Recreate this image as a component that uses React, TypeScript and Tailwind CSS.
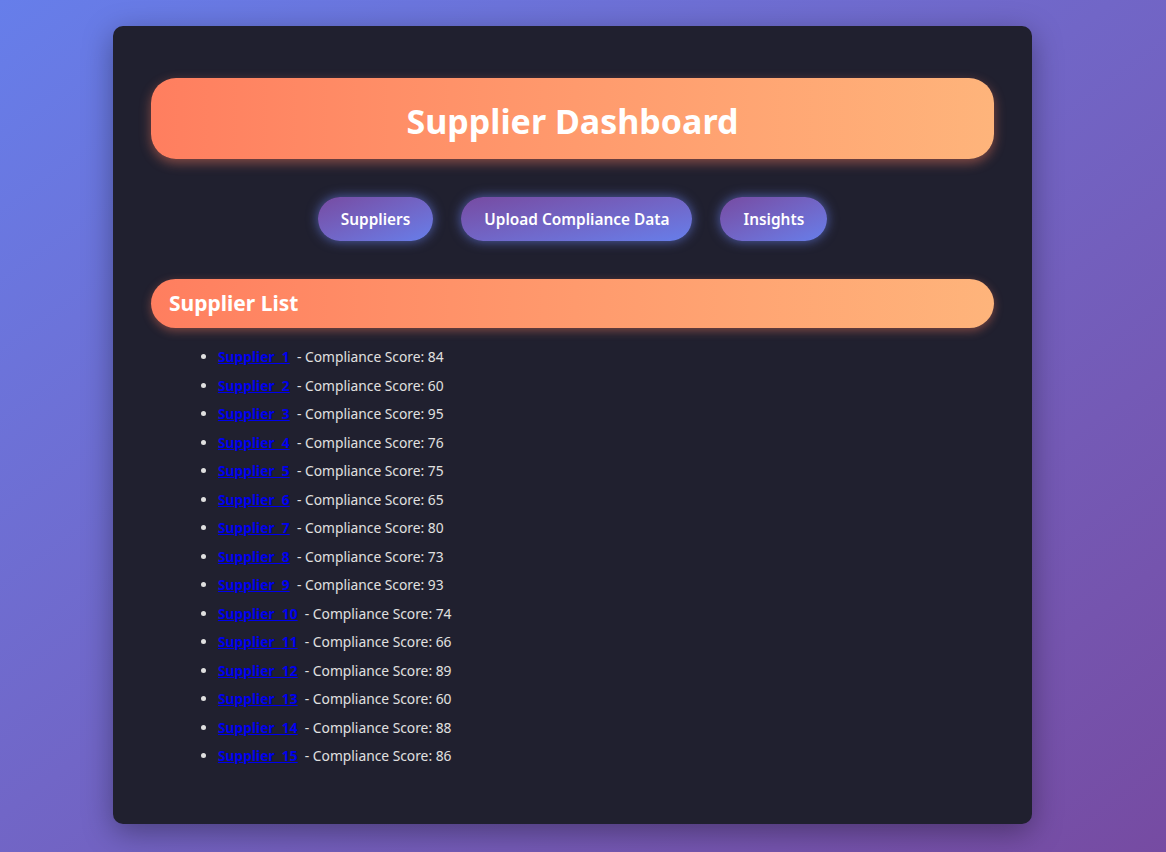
const scores = [84, 60, 95, 76, 75, 65, 80, 73, 93, 74, 66, 89, 60, 88, 86];

const navItems = ['Suppliers', 'Upload Compliance Data', 'Insights'];

export default function App() {
  return (
    <div
      className="min-h-[852px] w-full bg-gradient-to-br from-[#667eea] to-[#764ba2] pt-[26px] pb-[29px]"
      style={{ fontFamily: '"Noto Sans", "Open Sans", sans-serif' }}
    >
      <div className="ml-[113px] w-[919px] rounded-[10px] bg-[#20202f] px-[38px] pt-[52px] pb-[53px] shadow-[0_8px_30px_rgba(0,0,0,0.35)]">
        <header className="flex h-[81px] items-center justify-center rounded-[25px] bg-gradient-to-r from-[#ff7e5f] to-[#feb47b] pt-[5px] shadow-[0_4px_12px_rgba(255,126,95,0.45)]">
          <h1 className="text-[34px] font-bold text-white">Supplier Dashboard</h1>
        </header>

        <nav className="mt-[38px] flex justify-center gap-[28px]">
          {navItems.map((item) => (
            <a
              key={item}
              href="#"
              className="flex h-[44px] items-center rounded-full bg-gradient-to-br from-[#764ba2] to-[#667eea] px-[23px] pt-[1px] text-[15.4px] font-semibold text-white shadow-[0_0_12px_rgba(102,126,234,0.7)]"
            >
              {item}
            </a>
          ))}
        </nav>

        <section className="mt-[38px]">
          <h2 className="flex h-[49px] items-center rounded-full bg-gradient-to-r from-[#ff7e5f] to-[#feb47b] px-[18px] pt-[1px] text-[21px] font-bold text-white shadow-[0_3px_10px_rgba(255,126,95,0.4)]">
            Supplier List
          </h2>
          <ul className="mt-[15px] list-disc pl-[67px] text-[13.8px] text-[#e0e0e0] marker:text-[#e0e0e0]">
            {scores.map((score, i) => (
              <li key={i} className="h-[28.5px] leading-[28.5px]">
                <a href="#" className="font-bold whitespace-pre text-[#0000ee] underline">
                  {`Supplier  ${i + 1}`}
                </a>{'  '}
                <span className="whitespace-pre">{' '}</span>- Compliance Score: {score}
              </li>
            ))}
          </ul>
        </section>
      </div>
    </div>
  );
}
